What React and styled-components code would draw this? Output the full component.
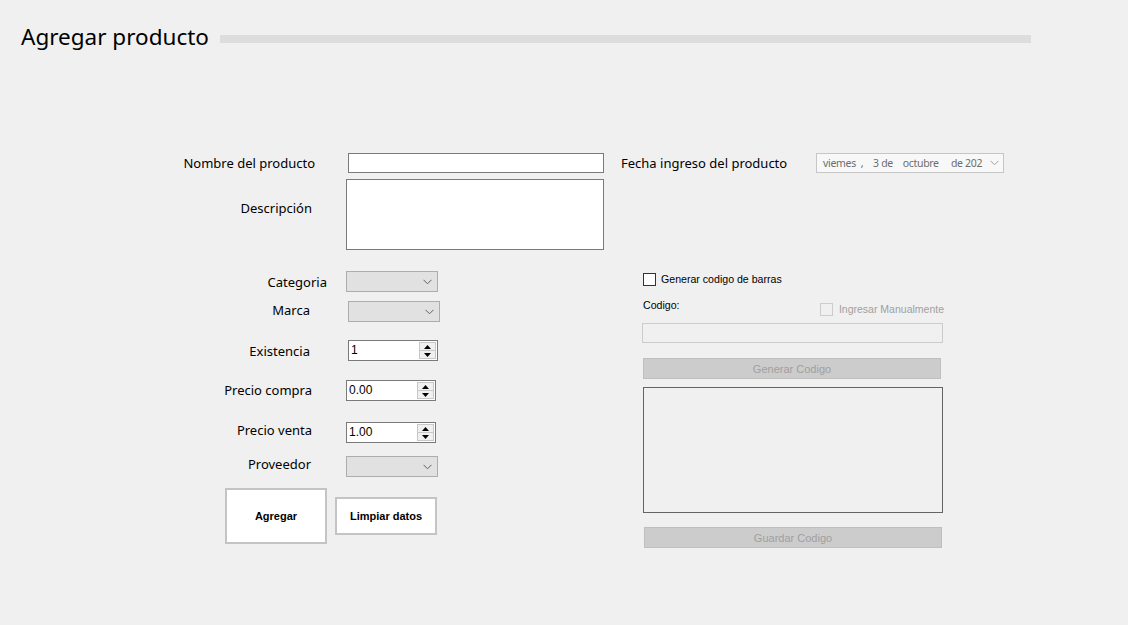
import React from "react";
import styled, { createGlobalStyle } from "styled-components";

const GlobalStyle = createGlobalStyle`
  html, body {
    margin: 0;
    padding: 0;
    background: #f0f0f0;
  }
  body {
    width: 1128px;
    height: 625px;
    overflow: hidden;
    font-family: "Noto Sans", "Liberation Sans", sans-serif;
    color: #000;
  }
`;

function Chevron({ color = "#606060" }) {
  return (
    <svg width="9" height="6" viewBox="0 0 9 6">
      <path d="M0.5 0.8 L4.5 4.8 L8.5 0.8" fill="none" stroke={color} strokeWidth="1" />
    </svg>
  );
}

function Spinner() {
  return (
    <SpinBox>
      <SpinHalf>
        <svg width="7" height="4" viewBox="0 0 7 4">
          <path d="M3.5 0 L7 4 L0 4 Z" fill="#000" />
        </svg>
      </SpinHalf>
      <SpinHalf $bottom>
        <svg width="7" height="4" viewBox="0 0 7 4">
          <path d="M0 0 L7 0 L3.5 4 Z" fill="#000" />
        </svg>
      </SpinHalf>
    </SpinBox>
  );
}

function Numeric({ value, offset }) {
  return (
    <NumericBox $offset={offset}>
      <NumericValue>{value}</NumericValue>
      <Spinner />
    </NumericBox>
  );
}

function Combo({ offset }) {
  return (
    <ComboBox $offset={offset}>
      <Chevron />
    </ComboBox>
  );
}

function App() {
  return (
    <>
      <GlobalStyle />
      <Page>
        <Header>
          <Title>Agregar producto</Title>
          <TitleBar />
        </Header>

        <Form>
          <LeftColumn>
            <Row $top={0}>
              <Label $pr={15}>Nombre del producto</Label>
              <TextInput $offset={2} />
            </Row>
            <Row $top={6} $start>
              <Label $pr={18} $pt={20}>Descripción</Label>
              <TextArea />
            </Row>
            <Row $top={21}>
              <Label $pr={3}>Categoria</Label>
              <Combo />
            </Row>
            <Row $top={9}>
              <Label $pr={20} $dy={-2}>Marca</Label>
              <Combo offset={2} />
            </Row>
            <Row $top={18}>
              <Label $pr={20}>Existencia</Label>
              <Numeric value="1" offset={2} />
            </Row>
            <Row $top={19}>
              <Label $pr={18} $dy={-1}>Precio compra</Label>
              <Numeric value="0.00" />
            </Row>
            <Row $top={21}>
              <Label $pr={18} $dy={-3}>Precio venta</Label>
              <Numeric value="1.00" />
            </Row>
            <Row $top={13}>
              <Label $pr={19} $dy={-3}>Proveedor</Label>
              <Combo />
            </Row>
            <Buttons>
              <ActionButton $w={102} $h={56}>Agregar</ActionButton>
              <ActionButton $w={102} $h={38}>Limpiar datos</ActionButton>
            </Buttons>
          </LeftColumn>

          <RightColumn>
            <DateRow>
              <DateLabel>Fecha ingreso del producto</DateLabel>
              <DatePicker>
                <DateText>viemes&nbsp; ,&nbsp;&nbsp;&nbsp; 3 de&nbsp;&nbsp;&nbsp; octubre&nbsp;&nbsp;&nbsp;&nbsp; de 202</DateText>
                <Chevron color="#a0a0a0" />
              </DatePicker>
            </DateRow>

            <CodePanel>
              <CheckRow>
                <CheckBox />
                <SmallText>Generar codigo de barras</SmallText>
              </CheckRow>
              <CodeHeader>
                <SmallText>Codigo:</SmallText>
                <CheckRow>
                  <CheckBox $disabled />
                  <SmallText $muted>Ingresar Manualmente</SmallText>
                </CheckRow>
              </CodeHeader>
              <DisabledInput />
              <DisabledButton $top={15}>Generar Codigo</DisabledButton>
              <PictureBox />
              <DisabledButton $top={14} $left={2}>Guardar Codigo</DisabledButton>
            </CodePanel>
          </RightColumn>
        </Form>
      </Page>
    </>
  );
}

const Page = styled.div`
  width: 1128px;
  height: 625px;
  padding: 24px 0 0 21px;
  box-sizing: border-box;
`;

const Header = styled.div`
  display: flex;
  align-items: center;
  gap: 11px;
`;

const Title = styled.h1`
  margin: 0;
  font-family: "Noto Sans", sans-serif;
  font-weight: 400;
  font-size: 22.5px;
  line-height: 26px;
  color: #000;
  white-space: nowrap;
`;

const TitleBar = styled.div`
  width: 811px;
  height: 8px;
  margin-top: 3px;
  background: #dddddd;
`;

const Form = styled.div`
  display: flex;
  margin-top: 103px;
  margin-left: 149px;
`;

const LeftColumn = styled.div`
  width: 434px;
  display: flex;
  flex-direction: column;
`;

const Row = styled.div`
  display: flex;
  align-items: ${({ $start }) => ($start ? "flex-start" : "center")};
  margin-top: ${({ $top }) => $top}px;
`;

const Label = styled.div`
  width: 160px;
  box-sizing: border-box;
  padding-right: ${({ $pr }) => $pr}px;
  padding-top: ${({ $pt }) => $pt || 0}px;
  margin-top: ${({ $dy }) => ($dy || 0) * 2}px;
  text-align: right;
  font-size: 13px;
  line-height: 18px;
  color: #000;
  white-space: nowrap;
  flex-shrink: 0;
  margin-right: 16px;
`;

const TextInput = styled.div`
  width: 256px;
  height: 20px;
  margin-left: ${({ $offset }) => $offset || 0}px;
  box-sizing: border-box;
  border: 1px solid #7a7a7a;
  background: #fff;
`;

const TextArea = styled.div`
  width: 258px;
  height: 71px;
  box-sizing: border-box;
  border: 1px solid #7a7a7a;
  background: #fff;
`;

const ComboBox = styled.div`
  width: 92px;
  height: 21px;
  margin-left: ${({ $offset }) => $offset || 0}px;
  box-sizing: border-box;
  border: 1px solid #adadad;
  background: #e1e1e1;
  display: flex;
  align-items: center;
  justify-content: flex-end;
  padding-right: 5px;
`;

const NumericBox = styled.div`
  width: 90px;
  height: 21px;
  margin-left: ${({ $offset }) => $offset || 0}px;
  box-sizing: border-box;
  border: 1px solid #7a7a7a;
  background: #fff;
  display: flex;
  align-items: stretch;
`;

const NumericValue = styled.div`
  flex: 1;
  font-family: "Liberation Sans", Arial, sans-serif;
  font-size: 12px;
  line-height: 18px;
  padding-left: 2px;
  color: #000;
`;

const SpinBox = styled.div`
  width: 15px;
  margin: 1px 1px 1px 0;
  display: flex;
  flex-direction: column;
  border: 1px solid #c8c8c8;
  background: #f0f0f0;
`;

const SpinHalf = styled.div`
  flex: 1;
  display: flex;
  align-items: center;
  justify-content: center;
  border-top: ${({ $bottom }) => ($bottom ? "1px solid #c8c8c8" : "none")};
`;

const Buttons = styled.div`
  display: flex;
  align-items: center;
  gap: 8px;
  margin-top: 11px;
  margin-left: 55px;
`;

const ActionButton = styled.button`
  width: ${({ $w }) => $w}px;
  height: ${({ $h }) => $h}px;
  box-sizing: border-box;
  border: 2px solid #c4c4c4;
  background: #fff;
  font-family: "Liberation Sans", Arial, sans-serif;
  font-weight: 700;
  font-size: 11px;
  color: #000;
  padding: 0;
  cursor: pointer;
`;

const RightColumn = styled.div`
  margin-left: 17px;
  display: flex;
  flex-direction: column;
`;

const DateRow = styled.div`
  display: flex;
  align-items: center;
  height: 20px;
`;

const DateLabel = styled.div`
  width: 195px;
  font-size: 13px;
  line-height: 18px;
  color: #000;
  white-space: nowrap;
`;

const DatePicker = styled.div`
  width: 188px;
  height: 20px;
  box-sizing: border-box;
  border: 1px solid #c6c6c6;
  background: #f8f8f8;
  display: flex;
  align-items: center;
  justify-content: space-between;
  padding: 0 4px 0 6px;
  overflow: hidden;
`;

const DateText = styled.span`
  font-family: "Noto Sans", sans-serif;
  font-size: 10.5px;
  color: #6d6d6d;
  white-space: nowrap;
  letter-spacing: -0.3px;
`;

const CodePanel = styled.div`
  width: 301px;
  margin-left: 21px;
  margin-top: 99px;
  display: flex;
  flex-direction: column;
`;

const CheckRow = styled.div`
  display: flex;
  align-items: center;
  gap: 5px;
  margin-left: 1px;
`;

const CheckBox = styled.div`
  width: 13px;
  height: 13px;
  box-sizing: border-box;
  border: 1px solid ${({ $disabled }) => ($disabled ? "#cccccc" : "#333333")};
  background: ${({ $disabled }) => ($disabled ? "#f0f0f0" : "#fff")};
`;

const SmallText = styled.span`
  font-family: "Liberation Sans", Arial, sans-serif;
  font-size: ${({ $muted }) => ($muted ? "10.5px" : "10.6px")};
  line-height: 14px;
  color: ${({ $muted }) => ($muted ? "#a0a0a0" : "#000")};
  white-space: nowrap;
`;

const CodeHeader = styled.div`
  display: flex;
  justify-content: space-between;
  align-items: flex-start;
  margin-top: 12px;
  padding-left: 1px;

  & > ${CheckRow} {
    margin-top: 4px;
    margin-right: -1px;
    gap: 6px;
  }
`;

const DisabledInput = styled.div`
  height: 20px;
  margin-top: 7px;
  box-sizing: border-box;
  border: 1px solid #cccccc;
  background: #f0f0f0;
`;

const DisabledButton = styled.div`
  width: 298px;
  height: 21px;
  margin-top: ${({ $top }) => $top}px;
  margin-left: ${({ $left }) => $left || 1}px;
  box-sizing: border-box;
  border: 1px solid #bfbfbf;
  background: #cccccc;
  display: flex;
  align-items: center;
  justify-content: center;
  font-family: "Liberation Sans", Arial, sans-serif;
  font-size: 11px;
  color: #a0a0a0;
`;

const PictureBox = styled.div`
  width: 300px;
  height: 126px;
  margin-top: 8px;
  margin-left: 1px;
  box-sizing: border-box;
  border: 1px solid #646464;
  background: #f0f0f0;
`;

export default App;
